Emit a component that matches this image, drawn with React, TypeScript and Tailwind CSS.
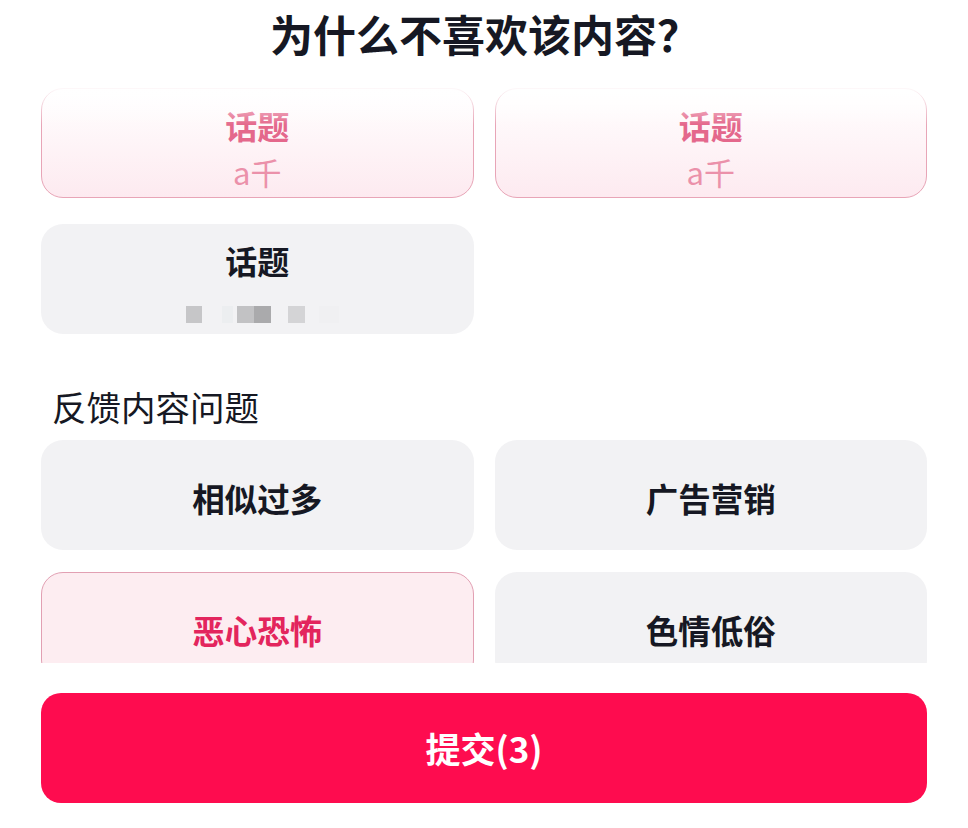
import React from 'react';

const FONT = { fontFamily: '"Noto Sans CJK SC", "Noto Sans", sans-serif' };

const BLUR_BLOCKS = [
  { w: 16, gap: 0, c: '#c6c6c8' },
  { w: 11, gap: 20, c: '#eceef0' },
  { w: 17, gap: 4, c: '#c2c2c4' },
  { w: 17, gap: 0, c: '#aaaaac' },
  { w: 17, gap: 17, c: '#d4d4d6' },
  { w: 20, gap: 14, c: '#f0f0f2' },
];

function TopicCard() {
  return (
    <div className="h-[110px] rounded-[22px] border border-[#e8a5b7] bg-gradient-to-b from-white to-[#fdeaf0] flex flex-col items-center pt-[20px]">
      <span className="text-[32px] leading-[32px] font-semibold text-[#e4688c]">话题</span>
      <span className="text-[31px] leading-[32px] mt-[15px] text-[#eb91aa]">a千</span>
    </div>
  );
}

function BlurredTopicCard() {
  return (
    <div className="h-[110px] rounded-[22px] bg-[#f2f2f4] flex flex-col items-center pt-[20px]">
      <span className="text-[32px] leading-[32px] font-semibold text-[#161823]">话题</span>
      <div className="flex mt-[30px] h-[17px] pl-[10px]">
        {BLUR_BLOCKS.map((b, i) => (
          <div key={i} className="h-[17px]" style={{ width: b.w, marginLeft: b.gap, background: b.c }} />
        ))}
      </div>
    </div>
  );
}

function ReasonCard({ label, selected }: { label: string; selected?: boolean }) {
  return (
    <div
      className={
        selected
          ? 'h-[110px] rounded-[22px] border border-[#e2a0b3] bg-[#fdedf1] flex items-center justify-center pt-[6px]'
          : 'h-[110px] rounded-[22px] bg-[#f2f2f4] flex items-center justify-center pt-[6px]'
      }
    >
      <span
        className={
          selected
            ? 'text-[32.5px] leading-[40px] font-semibold text-[#e3255d]'
            : 'text-[32.5px] leading-[40px] font-semibold text-[#161823]'
        }
      >
        {label}
      </span>
    </div>
  );
}

export default function App() {
  return (
    <div className="w-[968px] h-[828px] bg-white flex flex-col overflow-hidden" style={FONT}>
      {/* Title */}
      <div className="pt-[8px] h-[85px] text-center">
        <h1 className="text-[43px] leading-[50px] font-bold text-[#161823] pl-[2px]">为什么不喜欢该内容？</h1>
      </div>

      {/* Scroll area */}
      <div className="relative h-[578px] overflow-hidden px-[41px]">
        <div className="grid grid-cols-2 gap-x-[21px] pt-[3px]">
          <TopicCard />
          <TopicCard />
        </div>
        <div className="grid grid-cols-2 gap-x-[21px] mt-[26px]">
          <BlurredTopicCard />
          <div />
        </div>

        <div className="pt-[55px] pb-[17px] pl-[11px] text-[34.5px] leading-[34px] text-[#161823]">反馈内容问题</div>

        <div className="grid grid-cols-2 gap-x-[21px] gap-y-[22px]">
          <ReasonCard label="相似过多" />
          <ReasonCard label="广告营销" />
          <ReasonCard label="恶心恐怖" selected />
          <ReasonCard label="色情低俗" />
        </div>

        {/* top fade */}
        <div className="absolute top-0 left-0 right-0 h-[40px] bg-gradient-to-b from-white to-transparent" />
      </div>

      {/* Submit */}
      <div className="px-[41px] pt-[30px]">
        <button className="w-full h-[110px] rounded-[20px] bg-[#fe0c4f] text-white text-[35px] font-semibold flex items-center justify-center">
          提交(3)
        </button>
      </div>
    </div>
  );
}
